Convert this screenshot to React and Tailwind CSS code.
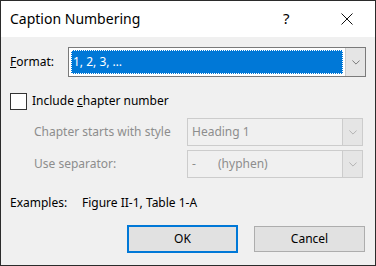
import React from 'react';

const Chevron = ({ className }) => (
  <svg viewBox="0 0 10 6" className={className} fill="none" stroke="currentColor" strokeWidth="1">
    <path d="M0.5 0.5 L5 5 L9.5 0.5" />
  </svg>
);

const DisabledSelect = ({ children }) => (
  <div className="flex h-[28px] w-[176px] border border-[#cccccc] bg-[#f0f0f0]">
    <div className="flex flex-1 items-center pl-[4px] text-[#8d8d8d]">{children}</div>
    <div className="flex w-[20px] items-center justify-center border-l border-[#cccccc] bg-[#e5e5e5] text-[#a6a6a6]">
      <Chevron className="w-[8px] h-[5px]" />
    </div>
  </div>
);

export default function App() {
  return (
    <div
      className="w-[376px] h-[266px] border border-[#2b2b2b] bg-[#f0f0f0] flex flex-col text-[12px] text-black"
      style={{ fontFamily: '"Segoe UI", "Noto Sans", sans-serif' }}
    >
      {/* title bar */}
      <div className="h-[36px] bg-white flex items-center pl-[9px] shrink-0">
        <span className="text-[14px] flex-1 pb-[2px]">Caption Numbering</span>
        <span className="text-[15px] w-[10px] mr-[48px] pb-[2px]">?</span>
        <svg viewBox="0 0 12 12" className="w-[12px] h-[12px] mr-[22px]" stroke="#111" strokeWidth="1">
          <path d="M0.5 0.5 L11.5 11.5 M11.5 0.5 L0.5 11.5" />
        </svg>
      </div>

      <div className="flex flex-col px-[9px]">
        {/* format row */}
        <div className="flex items-center mt-[10px]">
          <span className="w-[58px]"><u>F</u>ormat:</span>
          <div className="flex h-[30px] w-[298px] border border-[#7a7a7a] bg-white">
            <div className="flex flex-1 p-[2px]">
              <div className="flex-1 bg-[#0078d7] text-white flex items-center pl-[2px] outline outline-1 outline-dotted outline-white -outline-offset-1">
                1, 2, 3, …
              </div>
            </div>
            <div className="flex w-[20px] items-center justify-center border-l border-[#cccccc] bg-[#e5e5e5] text-[#606060]">
              <Chevron className="w-[8px] h-[5px]" />
            </div>
          </div>
        </div>

        {/* include chapter */}
        <div className="flex items-center mt-[15px] gap-[5px]">
          <div className="w-[17px] h-[17px] border border-[#333] bg-white" />
          <span>Include <u>c</u>hapter number</span>
        </div>

        <div className="flex items-center justify-between mt-[8px] pl-[24px] pr-[3px]">
          <span className="text-[#8d8d8d]">Chapter starts with style</span>
          <DisabledSelect>Heading 1</DisabledSelect>
        </div>
        <div className="flex items-center justify-between mt-[4px] pl-[24px] pr-[3px]">
          <span className="text-[#8d8d8d]">Use separator:</span>
          <DisabledSelect>
            <span className="w-[26px]">-</span>(hyphen)
          </DisabledSelect>
        </div>

        {/* examples */}
        <div className="flex items-center mt-[16px]">
          <span className="w-[72px]">Examples:</span>
          <span>Figure II-1, Table 1-A</span>
        </div>

        {/* buttons */}
        <div className="flex justify-end gap-[16px] mt-[13px] pr-[1px]">
          <button className="w-[111px] h-[28px] bg-[#e1e1e1] border-2 border-[#0078d7]">OK</button>
          <button className="w-[111px] h-[26px] mt-[1px] bg-[#e1e1e1] border border-[#adadad]">Cancel</button>
        </div>
      </div>
    </div>
  );
}
